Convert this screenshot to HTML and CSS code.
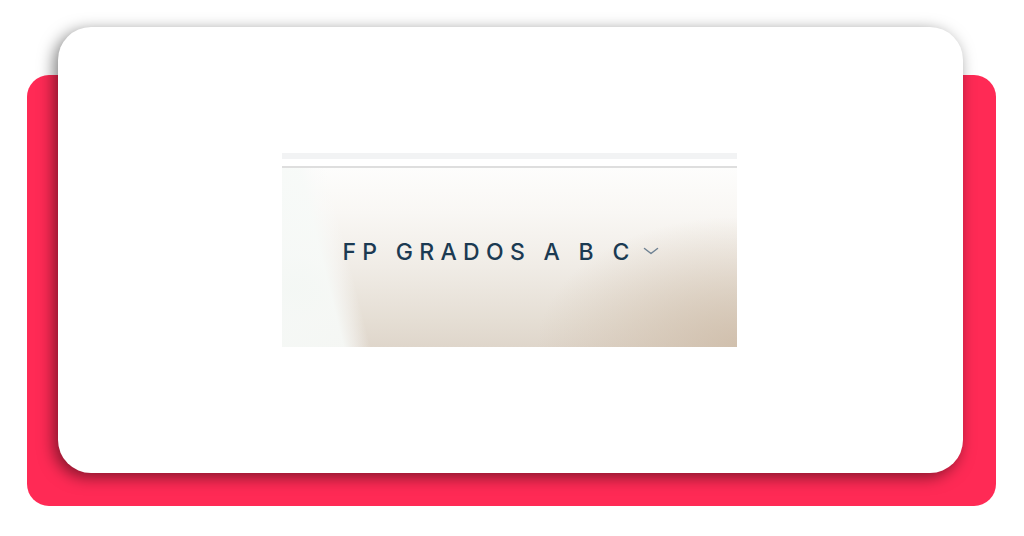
FILE: index.html
```html
<!DOCTYPE html>
<html lang="es">
<head>
<meta charset="utf-8">
<title>FP Grados</title>
<link rel="stylesheet" href="styles.css">
</head>
<body>
<div class="stage">
  <div class="backdrop"></div>
  <div class="card">
    <div class="shot">
      <div class="strip"></div>
      <div class="rule"></div>
      <div class="hero">
        <div class="menu">
          <span class="label">FP GRADOS A B C</span>
          <svg class="chev" width="16" height="8" viewBox="0 0 16 8" aria-hidden="true">
            <path d="M1.5 1.5 L8 6.5 L14.5 1.5" fill="none" stroke="#6f8293" stroke-width="1.5" stroke-linecap="round" stroke-linejoin="round"/>
          </svg>
        </div>
      </div>
    </div>
  </div>
</div>
</body>
</html>
```

FILE: styles.css
```css
html, body {
  margin: 0;
  padding: 0;
  background: #ffffff;
}
body {
  width: 1024px;
  height: 536px;
  overflow: hidden;
  font-family: Inter, "Noto Sans", "Liberation Sans", sans-serif;
}
.stage {
  display: grid;
  width: 1024px;
  height: 536px;
}
.backdrop {
  grid-area: 1 / 1;
  margin: 75px 0 0 27px;
  width: 969px;
  height: 431px;
  background: #ff2a55;
  border-radius: 22px;
}
.card {
  grid-area: 1 / 1;
  margin: 27px 0 0 58px;
  width: 905px;
  height: 446px;
  background: #ffffff;
  border-radius: 33px;
  box-shadow: -4px 4px 16px rgba(0, 0, 0, 0.5);
  display: flex;
  align-items: center;
  justify-content: center;
}
.shot {
  width: 455px;
  display: flex;
  flex-direction: column;
  margin-left: -2px;
}
.strip {
  height: 6px;
  background: #f2f3f4;
}
.rule {
  height: 2px;
  margin-top: 7px;
  background: #dedede;
}
.hero {
  height: 179px;
  display: flex;
  align-items: center;
  justify-content: center;
  background:
    linear-gradient(76deg, rgba(246, 249, 247, 0.96) 0px, rgba(247, 250, 248, 0.9) 60px, rgba(249, 250, 249, 0.5) 72px, rgba(249, 250, 249, 0) 86px),
    radial-gradient(ellipse 45px 35px at 8px 122px, rgba(200, 215, 198, 0.8), rgba(200, 215, 198, 0) 100%),
    radial-gradient(ellipse 200px 130px at 100% 100%, rgba(206, 188, 168, 0.85), rgba(206, 188, 168, 0) 100%),
    linear-gradient(180deg, #fdfdfc 0%, #f9f7f4 25%, #f0ece6 55%, #e5ded4 85%, #dfd6cb 100%);
}
.menu {
  display: flex;
  align-items: center;
  gap: 7px;
  margin: 0 18px 11px 0;
}
.label {
  font-size: 23px;
  font-weight: 500;
  letter-spacing: 6.3px;
  color: #1b3a52;
  line-height: 1;
}
.chev {
  display: block;
  margin-top: -2px;
}
```
